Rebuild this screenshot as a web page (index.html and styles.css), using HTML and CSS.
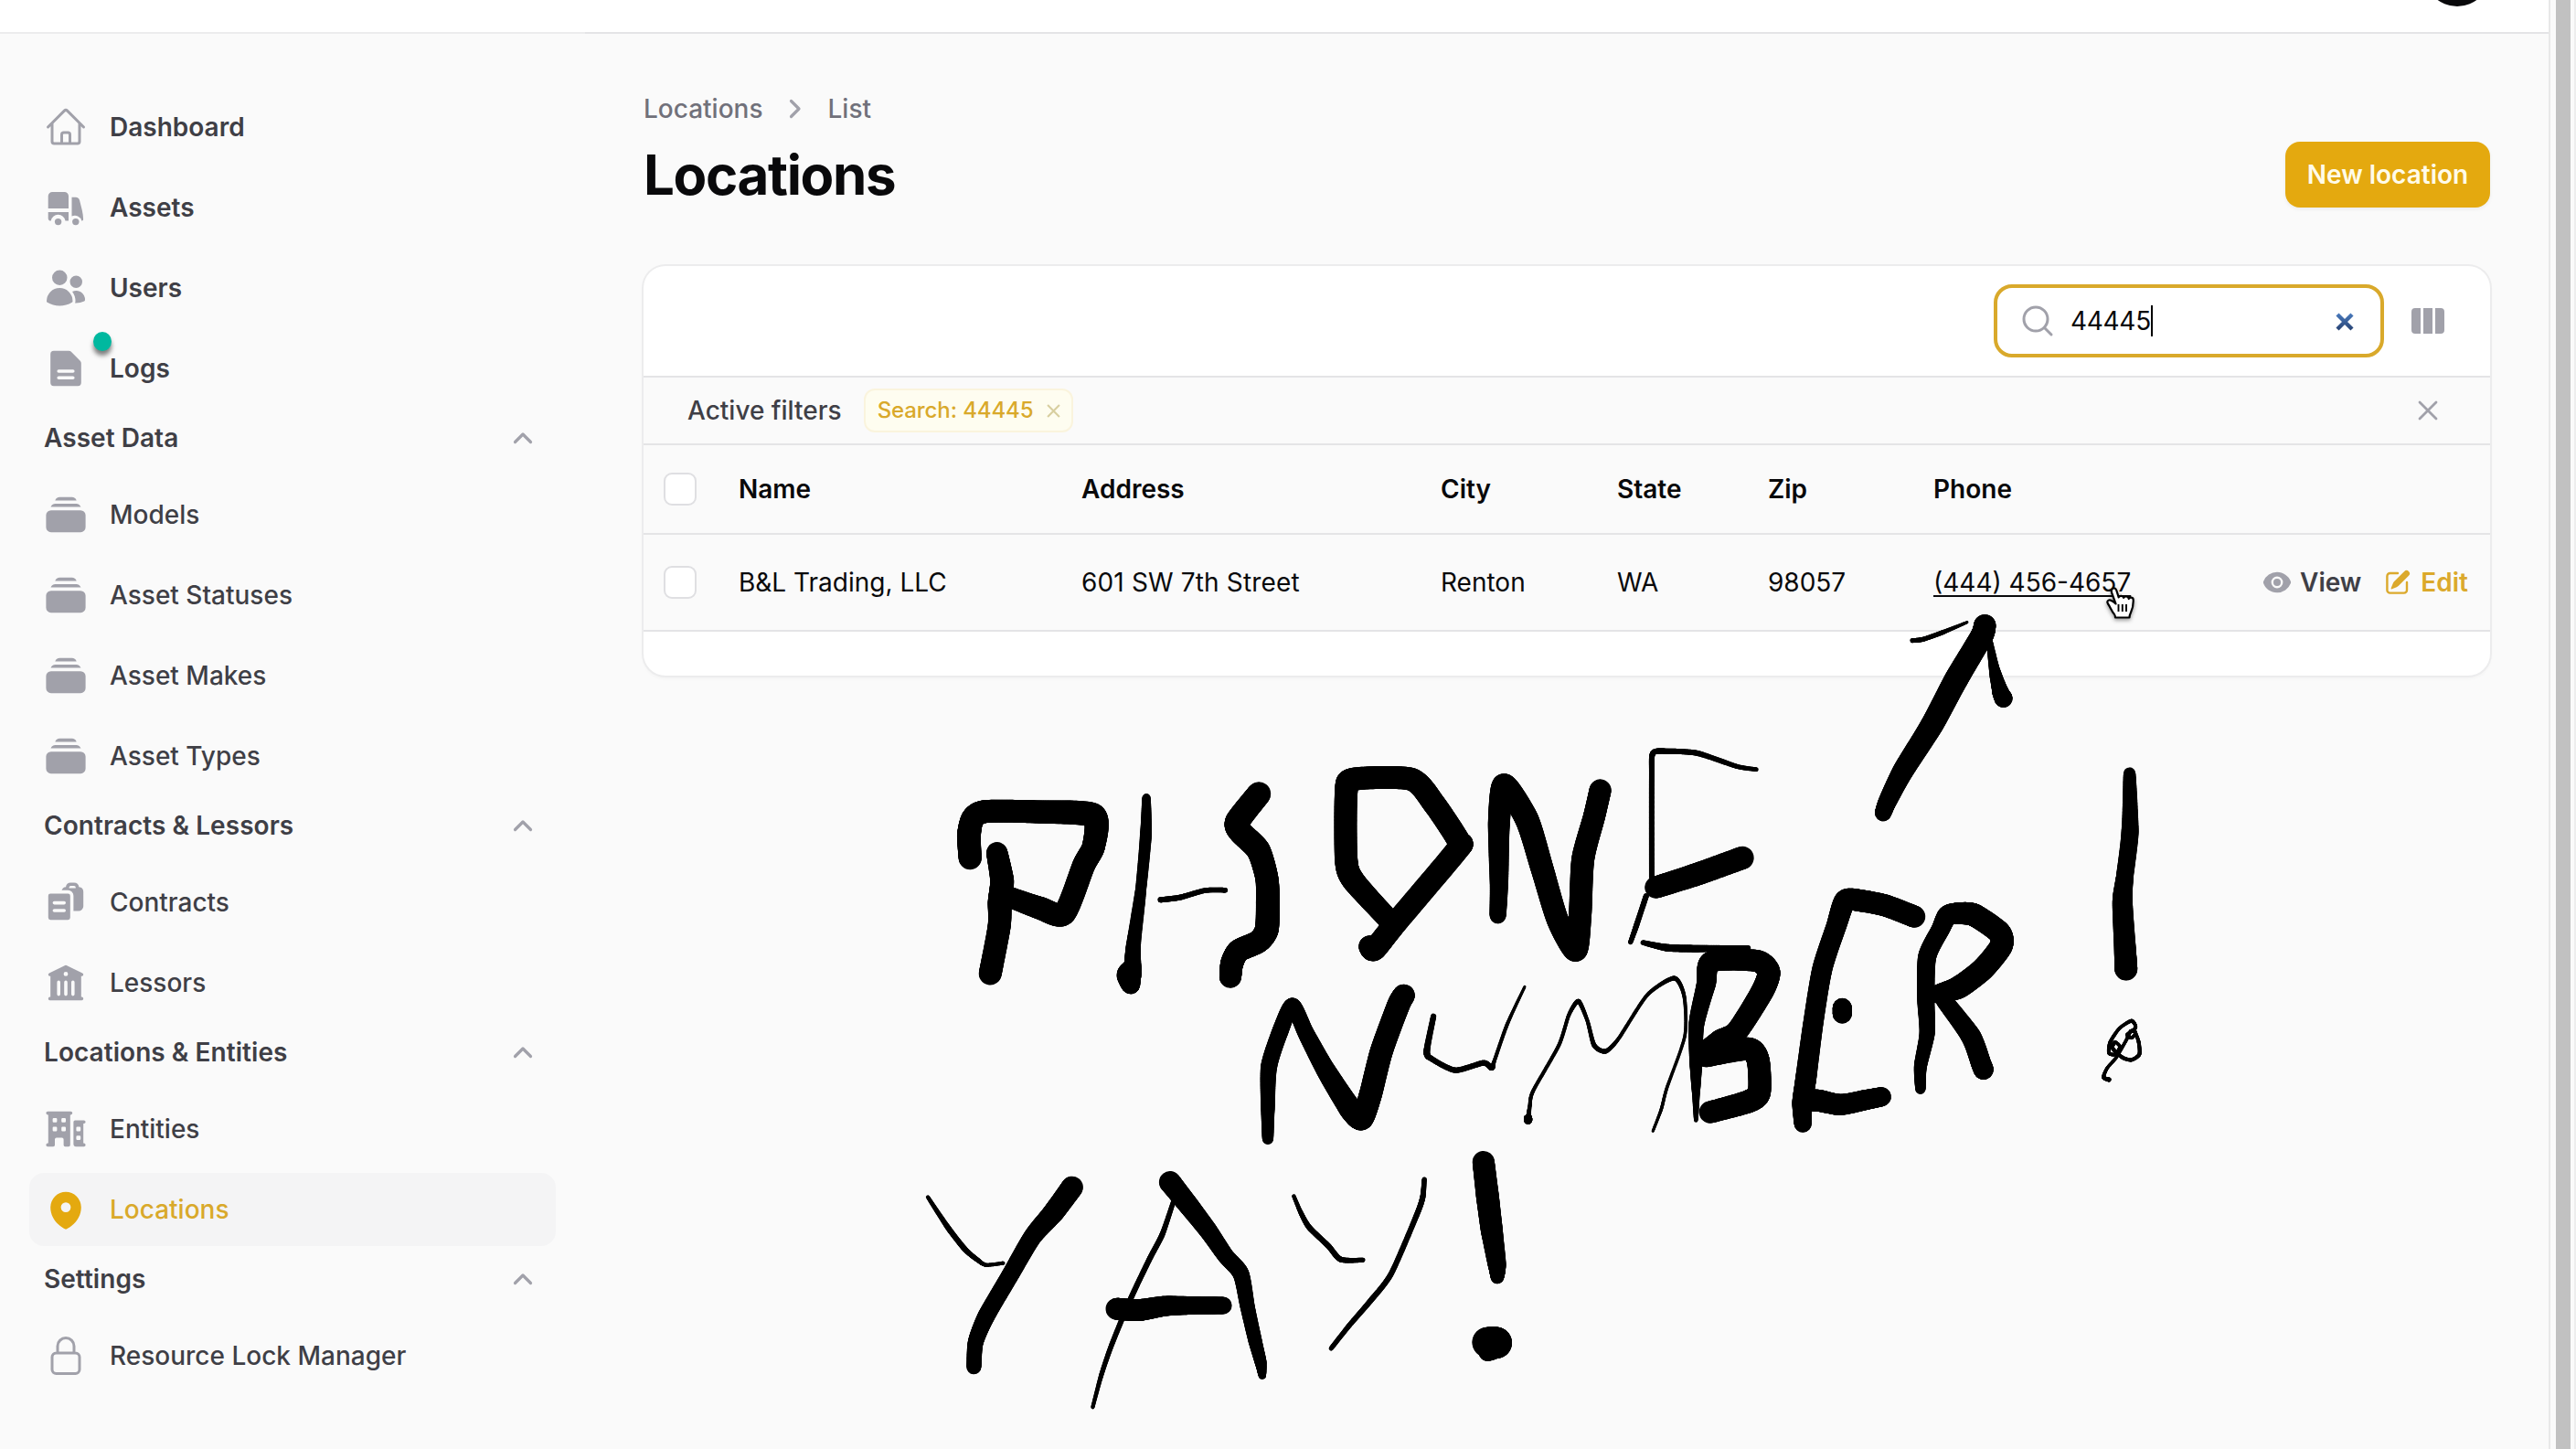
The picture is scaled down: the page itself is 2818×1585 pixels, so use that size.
FILE: index.html
```html
<!DOCTYPE html>
<html lang="en">
<head>
<meta charset="utf-8">
<title>Locations</title>
<link rel="stylesheet" href="styles.css">
</head>
<body>
<svg class="defs" aria-hidden="true">
  <symbol id="stack" viewBox="0 0 20 20"><path d="M5.127 3.502 5.25 3.5h9.5c.041 0 .082 0 .123.002A2.251 2.251 0 0 0 12.75 2h-5.5a2.25 2.25 0 0 0-2.123 1.502ZM1 10.25A2.25 2.25 0 0 1 3.25 8h13.5A2.25 2.25 0 0 1 19 10.25v5.5A2.25 2.25 0 0 1 16.75 18H3.25A2.25 2.25 0 0 1 1 15.75v-5.5ZM3.25 6.5c-.04 0-.082 0-.123.002A2.25 2.25 0 0 1 5.25 5h9.5c.98 0 1.814.627 2.123 1.502a3.819 3.819 0 0 0-.123-.002H3.25Z"/></symbol>
  <symbol id="chevron" viewBox="0 0 24 24"><path d="M3.5 16.5 12 8l8.500 8.500" fill="none" stroke="currentColor" stroke-width="3.200" stroke-linecap="round" stroke-linejoin="round"/></symbol>
</svg>
<div class="app">
  <div class="page">
    <header class="topbar"><div class="topbar-brand"></div><div class="topbar-main"><span class="avatar"></span></div></header>
    <div class="body">
      <nav class="sidebar">
        <a class="item strong"><svg class="icon" viewBox="0 0 24 24"><path class="line" d="m2.250 12 8.954-8.955a1.126 1.126 0 0 1 1.591 0L21.750 12M4.500 9.750v10.125c0 .621.504 1.125 1.125 1.125H9.750v-4.875c0-.621.504-1.125 1.125-1.125h2.250c.621 0 1.125.504 1.125 1.125V21h4.125c.621 0 1.125-.504 1.125-1.125V9.750M8.250 21h8.250"/></svg>Dashboard</a>
        <a class="item strong"><svg class="icon" viewBox="0 0 48 48"><path d="M9.500 7h13a4.500 4.500 0 0 1 4.500 4.500V25H4.700V11.500A4.500 4.500 0 0 1 9.500 7ZM4.700 29H27v9.500h-3.500a8 8 0 0 0-15.800 0H7.500a2.800 2.800 0 0 1-2.800-2.800ZM30.500 12.800h4.200a4.500 4.500 0 0 1 4.400 3.500c2 8 3.900 14 4 20.500 0 1-.5 1.700-1.300 1.700h-.5a7.600 7.600 0 0 0-10.800-5Z"/><circle cx="15.600" cy="39.600" r="3.700"/><circle cx="34.800" cy="39.600" r="3.700"/></svg>Assets</a>
        <a class="item strong"><svg class="icon" viewBox="0 0 24 24"><path d="M4.500 6.375a4.125 4.125 0 1 1 8.250 0 4.125 4.125 0 0 1-8.250 0ZM14.250 8.625a3.375 3.375 0 1 1 6.750 0 3.375 3.375 0 0 1-6.750 0ZM1.500 19.125a7.125 7.125 0 0 1 14.250 0v.003l-.001.119a.75.75 0 0 1-.363.63 13.067 13.067 0 0 1-6.761 1.873c-2.472 0-4.786-.684-6.760-1.873a.75.75 0 0 1-.364-.63l-.001-.122ZM17.250 19.128l-.001.144a2.250 2.250 0 0 1-.233.96 10.088 10.088 0 0 0 5.060-1.010.75.75 0 0 0 .42-.643 4.875 4.875 0 0 0-6.957-4.611 8.586 8.586 0 0 1 1.710 5.157v.003Z"/></svg>Users</a>
        <a class="item strong logs"><svg class="icon" viewBox="0 0 20 20"><path fill-rule="evenodd" d="M4.500 2A1.500 1.500 0 0 0 3 3.500v13A1.500 1.500 0 0 0 4.500 18h11a1.500 1.500 0 0 0 1.500-1.500V7.621a1.500 1.500 0 0 0-.44-1.060l-4.120-4.122A1.500 1.500 0 0 0 11.378 2H4.500Zm2.250 8.500a.75.75 0 0 0 0 1.500h6.500a.75.75 0 0 0 0-1.500h-6.500Zm0 3a.75.75 0 0 0 0 1.500h6.500a.75.75 0 0 0 0-1.500h-6.500Z"/></svg>Logs<span class="dot"></span></a>

        <div class="group">Asset Data<svg class="caret"><use href="#chevron"/></svg></div>
        <a class="item"><svg class="icon"><use href="#stack"/></svg>Models</a>
        <a class="item"><svg class="icon"><use href="#stack"/></svg>Asset Statuses</a>
        <a class="item"><svg class="icon"><use href="#stack"/></svg>Asset Makes</a>
        <a class="item"><svg class="icon"><use href="#stack"/></svg>Asset Types</a>

        <div class="group">Contracts &amp; Lessors<svg class="caret"><use href="#chevron"/></svg></div>
        <a class="item"><svg class="icon" viewBox="0 0 20 20"><path fill-rule="evenodd" d="M15.988 3.012A2.250 2.250 0 0 1 18 5.250v6.500A2.250 2.250 0 0 1 15.750 14H13.500v-3.379a3 3 0 0 0-.002-.121V7A2.500 2.500 0 0 0 11 4.500H8.128a2.252 2.252 0 0 1 1.884-1.488A2.250 2.250 0 0 1 12.250 1h1.500a2.250 2.250 0 0 1 2.238 2.012ZM11.500 3.250a.75.75 0 0 1 .75-.75h1.500a.75.75 0 0 1 .75.75v.250h-3v-.250Z"/><path fill-rule="evenodd" d="M2 7a1 1 0 0 1 1-1h8a1 1 0 0 1 1 1v10a1 1 0 0 1-1 1H3a1 1 0 0 1-1-1V7Zm2 3.250a.75.75 0 0 1 .75-.75h4.500a.75.75 0 0 1 0 1.500h-4.500a.75.75 0 0 1-.75-.75Zm0 3.500a.75.75 0 0 1 .75-.75h4.500a.75.75 0 0 1 0 1.500h-4.500a.75.75 0 0 1-.75-.75Z"/></svg>Contracts</a>
        <a class="item"><svg class="icon" viewBox="0 0 20 20"><path fill-rule="evenodd" d="M9.674 2.075a.75.75 0 0 1 .652 0l7.250 3.500A.75.75 0 0 1 17 6.957V16.500h.250a.75.75 0 0 1 0 1.500H2.750a.75.75 0 0 1 0-1.500H3V6.957a.75.75 0 0 1-.576-1.382l7.250-3.500ZM11 6a1 1 0 1 1-2 0 1 1 0 0 1 2 0ZM7.500 9.750a.75.75 0 0 0-1.500 0v5.500a.75.75 0 0 0 1.500 0v-5.500Zm3.250 0a.75.75 0 0 0-1.500 0v5.500a.75.75 0 0 0 1.500 0v-5.500Zm3.250 0a.75.75 0 0 0-1.500 0v5.500a.75.75 0 0 0 1.500 0v-5.500Z"/></svg>Lessors</a>

        <div class="group">Locations &amp; Entities<svg class="caret"><use href="#chevron"/></svg></div>
        <a class="item"><svg class="icon" viewBox="0 0 20 20"><path fill-rule="evenodd" d="M1 2.750A.75.75 0 0 1 1.750 2h10.500a.75.75 0 0 1 0 1.500H12v13.750a.75.75 0 0 1-.75.75h-1.500a.75.75 0 0 1-.75-.75v-2.500a.75.75 0 0 0-.75-.75h-2.500a.75.75 0 0 0-.75.75v2.500a.75.75 0 0 1-.75.75h-2.500a.75.75 0 0 1 0-1.500H2v-13h-.250A.75.75 0 0 1 1 2.750ZM4 5.500a.5.5 0 0 1 .5-.5h1a.5.5 0 0 1 .5.5v1a.5.5 0 0 1-.5.5h-1a.5.5 0 0 1-.5-.5v-1ZM4.500 9a.5.5 0 0 0-.5.5v1a.5.5 0 0 0 .5.5h1a.5.5 0 0 0 .5-.5v-1a.5.5 0 0 0-.5-.5h-1ZM8 5.500a.5.5 0 0 1 .5-.5h1a.5.5 0 0 1 .5.5v1a.5.5 0 0 1-.5.5h-1a.5.5 0 0 1-.5-.5v-1ZM8.500 9a.5.5 0 0 0-.5.5v1a.5.5 0 0 0 .5.5h1a.5.5 0 0 0 .5-.5v-1a.5.5 0 0 0-.5-.5h-1ZM14.250 6a.75.75 0 0 0-.75.75V17a1 1 0 0 0 1 1h3.750a.75.75 0 0 0 0-1.500H18v-9h.250a.75.75 0 0 0 0-1.500h-4Zm.5 3.500a.5.5 0 0 1 .5-.5h1a.5.5 0 0 1 .5.5v1a.5.5 0 0 1-.5.5h-1a.5.5 0 0 1-.5-.5v-1Zm.5 3.500a.5.5 0 0 0-.5.5v1a.5.5 0 0 0 .5.5h1a.5.5 0 0 0 .5-.5v-1a.5.5 0 0 0-.5-.5h-1Z"/></svg>Entities</a>
        <a class="item active"><svg class="icon" viewBox="0 0 20 20"><path fill-rule="evenodd" d="m9.690 18.933.003.001C9.890 19.020 10 19 10 19s.11.020.308-.066l.002-.001.006-.003.018-.008a5.741 5.741 0 0 0 .281-.14c.186-.096.446-.24.757-.433.62-.384 1.445-.966 2.274-1.765C15.302 14.988 17 12.493 17 9A7 7 0 1 0 3 9c0 3.492 1.698 5.988 3.355 7.584a13.731 13.731 0 0 0 2.273 1.765 11.842 11.842 0 0 0 .976.544l.062.029.018.008.006.003ZM10 11.250a2.250 2.250 0 1 0 0-4.500 2.250 2.250 0 0 0 0 4.500Z"/></svg>Locations</a>

        <div class="group">Settings<svg class="caret"><use href="#chevron"/></svg></div>
        <a class="item"><svg class="icon" viewBox="0 0 24 24"><path class="line" d="M16.500 10.500V6.750a4.500 4.500 0 1 0-9 0v3.750m-.75 11.250h10.500a2.250 2.250 0 0 0 2.250-2.250v-6.750a2.250 2.250 0 0 0-2.250-2.250H6.750a2.250 2.250 0 0 0-2.250 2.250v6.750a2.250 2.250 0 0 0 2.250 2.250Z"/></svg>Resource Lock Manager</a>
      </nav>

      <main class="main">
        <div class="heading">
          <div class="titles">
            <div class="crumbs"><span>Locations</span><svg class="crumb-sep" viewBox="0 0 40 40"><path d="m15.500 11.500 8.500 8.500-8.500 8.500" fill="none" stroke="currentColor" stroke-width="3.200" stroke-linecap="round" stroke-linejoin="round"/></svg><span>List</span></div>
            <h1>Locations</h1>
          </div>
          <button class="new">New location</button>
        </div>

        <section class="card">
          <div class="toolbar">
            <label class="search">
              <svg class="glass" viewBox="0 0 36 36"><circle cx="16" cy="16" r="13" /><path d="m25.500 25.500 7.500 7.500"/></svg>
              <span class="query">44445</span><span class="text-caret"></span>
              <svg class="clear" viewBox="0 0 20 20"><defs><linearGradient id="blue" x1="0" y1="0" x2="0" y2="20" gradientUnits="userSpaceOnUse"><stop offset="0" stop-color="#4a7cc0"/><stop offset="1" stop-color="#26406f"/></linearGradient></defs><path d="m2 2 16 16M18 2 2 18" stroke="url(#blue)" stroke-width="4.400"/></svg>
            </label>
            <svg class="columns" viewBox="0 0 36 28"><path d="M4 0h6v28H4a4 4 0 0 1-4-4V4a4 4 0 0 1 4-4ZM13 0h10v28H13ZM26 0h6a4 4 0 0 1 4 4v20a4 4 0 0 1-4 4h-6Z"/></svg>
          </div>
          <div class="filters">
            <span class="filters-label">Active filters</span>
            <span class="badge">Search: 44445<svg class="badge-x" viewBox="0 0 14 14"><path d="m1 1 12 12M13 1 1 13"/></svg></span>
            <svg class="filters-x" viewBox="0 0 22 22"><path d="m2 2 18 18M20 2 2 20"/></svg>
          </div>
          <div class="row head">
            <span class="check"></span><span>Name</span><span>Address</span><span>City</span><span>State</span><span>Zip</span><span>Phone</span><span></span>
          </div>
          <div class="row">
            <span class="check"></span><span>B&amp;L Trading, LLC</span><span class="address">601 SW 7th Street</span><span>Renton</span><span>WA</span><span>98057</span><span><a class="phone">(444) 456-4657</a></span>
            <span class="actions">
              <a class="view"><svg viewBox="0 0 20 20"><path d="M10 12.500a2.500 2.500 0 1 0 0-5 2.500 2.500 0 0 0 0 5Z"/><path fill-rule="evenodd" d="M.664 10.590a1.651 1.651 0 0 1 0-1.186A10.004 10.004 0 0 1 10 3c4.257 0 7.893 2.660 9.336 6.410.147.381.146.804 0 1.186A10.004 10.004 0 0 1 10 17c-4.257 0-7.893-2.660-9.336-6.410ZM14 10a4 4 0 1 1-8 0 4 4 0 0 1 8 0Z"/></svg>View</a>
              <a class="edit"><svg viewBox="0 0 20 20"><path d="m5.433 13.917 1.262-3.155A4 4 0 0 1 7.580 9.420l6.920-6.918a2.121 2.121 0 0 1 3 3l-6.920 6.918c-.383.383-.84.685-1.343.886l-3.154 1.262a.5.5 0 0 1-.65-.65Z"/><path d="M3.500 5.750c0-.69.56-1.250 1.250-1.250H10A.75.75 0 0 0 10 3H4.750A2.750 2.750 0 0 0 2 5.750v9.500A2.750 2.750 0 0 0 4.750 18h9.500A2.750 2.750 0 0 0 17 15.250V10a.75.75 0 0 0-1.500 0v5.250c0 .69-.56 1.250-1.250 1.250h-9.500c-.69 0-1.250-.56-1.250-1.250v-9.500Z"/></svg>Edit</a>
            </span>
          </div>
          <div class="foot"></div>
        </section>
      </main>
    </div>
  </div>
  <div class="scrollbar"><div class="thumb"></div></div>
</div>

<canvas class="ink" width="2818" height="1585"></canvas>
<svg class="hand" viewBox="0 0 34 38"><path d="M8.500 3.500C6.500 4.500 6.500 7 7.500 9.500l4 11c-2-1.800-5-4.500-7.500-4-2 .6-2 2.500-1 4 2.500 3.500 4 8.500 7 11.500 1 1.500 1 2.500 1 3.500h15.500c0-2 .5-3.500 1.500-5.500 1.800-4 3-7.500 2.700-14 0-2.800-4-3.200-5-1-.3-2.700-4.300-3.500-5.500-1.200-.8-2.500-4.500-2.700-5.500-.4L12.200 5.500C11.500 3.500 10 3 8.500 3.500Z" fill="#fff" stroke="#000" stroke-width="2.200" stroke-linejoin="round"/><path d="M14.500 21v8M18.800 21v8M23 21v8" stroke="#000" stroke-width="1.900"/></svg>
<script src="ink.js"></script>
</body>
</html>
```
FILE: styles.css
```css
* { box-sizing: border-box; }
body {
  margin: 0;
  width: 2818px;
  height: 1585px;
  overflow: hidden;
  position: relative;
  background: #fafafa;
  color: #09090b;
  font: 400 28px/40px Inter, "Liberation Sans", sans-serif;
}
.defs { display: none; }
svg { display: block; flex: none; fill: currentColor; }
.app { display: flex; height: 1585px; }
.page { width: 2788px; display: flex; flex-direction: column; }

.topbar { display: flex; height: 37px; background: #fff; }
.topbar-brand { width: 640px; border-bottom: 2px solid #ececed; }
.topbar-main {
  flex: 1;
  display: flex;
  justify-content: flex-end;
  align-items: flex-end;
  padding-right: 64px;
  border-bottom: 2px solid #e4e4e6;
  overflow: hidden;
}
.avatar { width: 72px; height: 72px; margin-bottom: 28px; border-radius: 50%; background: #09090b; flex: none; }

.body { display: flex; flex: 1; }
.sidebar { width: 640px; padding: 62px 32px 0; display: flex; flex-direction: column; }
.item {
  display: flex;
  align-items: center;
  gap: 24px;
  height: 80px;
  margin-bottom: 8px;
  padding: 0 16px;
  border-radius: 16px;
  font-weight: 500;
  color: #3f3f46;
}
.item.strong { font-weight: 600; }
.item:has(+ .group) { margin-bottom: 0; }
.icon { width: 48px; height: 48px; color: #a1a1aa; }
.line { fill: none; stroke: currentColor; stroke-width: 1.5; stroke-linecap: round; stroke-linejoin: round; }
.item.active { background: #f4f4f5; color: #d9a92b; }
.item.active .icon { color: #e4a90f; }
.group {
  display: flex;
  align-items: center;
  justify-content: space-between;
  height: 72px;
  margin-bottom: 8px;
  padding: 0 24px 0 16px;
  font-weight: 600;
  letter-spacing: .05px;
  color: #3f3f46;
}
.caret { width: 24px; height: 24px; color: #a1a1aa; }
.logs { position: relative; }
.dot {
  position: absolute;
  left: 70px;
  top: 0;
  width: 20px;
  height: 21px;
  border-radius: 50%;
  background: #00b89f;
  box-shadow: 0 5px 5px rgba(0, 0, 0, .5);
}

.main { flex: 1; padding: 62px 64px 0; }
.heading { display: flex; justify-content: space-between; align-items: center; height: 184px; }
.titles { padding-bottom: 56px; }
.crumbs { display: flex; align-items: center; font-weight: 500; color: #71717a; }
.crumb-sep { width: 40px; height: 40px; margin: 0 16px 0 15px; color: #a1a1aa; }
h1 { margin: 16px 0 0; font-size: 60px; line-height: 72px; font-weight: 700; letter-spacing: -1.35px; }
.new {
  width: 224px;
  height: 72px;
  border: 0;
  border-radius: 16px;
  background: #e4a90f;
  color: #fffbe9;
  font: 600 28px/40px Inter, sans-serif;
  padding: 0;
  white-space: nowrap;
  box-shadow: 0 2px 4px rgba(0, 0, 0, .06);
}

.card {
  width: 2020px;
  margin-top: 8px;
  border-radius: 24px;
  background: #fff;
  box-shadow: 0 0 0 2px #ececed, 0 3px 4px rgba(0, 0, 0, .04);
}
.toolbar {
  display: flex;
  align-items: center;
  justify-content: flex-end;
  height: 122px;
  padding-right: 50px;
  gap: 30px;
  border-bottom: 2px solid #e4e4e6;
}
.search {
  display: flex;
  align-items: center;
  width: 427px;
  height: 80px;
  padding: 0 29px 0 26px;
  border: 4px solid #d9a92b;
  border-radius: 20px;
  background: #fff;
}
.glass { width: 36px; height: 36px; fill: none; stroke: #a1a1aa; stroke-width: 3; stroke-linecap: round; }
.query { margin-left: 18px; letter-spacing: -.3px; }
.text-caret { width: 2px; height: 34px; background: #000; }
.clear { width: 20px; height: 20px; margin-left: auto; position: relative; top: 1px; }
.columns { width: 36px; height: 28px; color: #a1a1aa; }

.filters {
  display: flex;
  align-items: center;
  height: 74px;
  padding: 0 57px 0 48px;
  background: #fafafa;
  border-bottom: 2px solid #e4e4e6;
}
.filters-label { font-weight: 500; color: #3f3f46; }
.badge {
  display: flex;
  align-items: center;
  justify-content: space-between;
  width: 229px;
  height: 48px;
  margin-left: 24px;
  padding: 0 12px 0 13px;
  border: 2px solid #faf4dd;
  border-radius: 12px;
  background: #fefdf0;
  font-size: 24px;
  font-weight: 500;
  letter-spacing: -.1px;
  color: #d9a92b;
}
.badge-x { width: 15px; height: 15px; stroke: #d8cfa0; stroke-width: 2; }
.filters-x { width: 22px; height: 22px; margin-left: auto; stroke: #a1a1aa; stroke-width: 2.8; stroke-linecap: round; }

.row {
  display: grid;
  grid-template-columns: 104px 375px 393px 193px 165px 181px 240px 1fr;
  align-items: center;
  height: 106px;
  background: #fafafa;
  border-bottom: 2px solid #e4e4e6;
  white-space: nowrap;
}
.row.head { height: 98px; font-weight: 600; }
.check { width: 36px; height: 36px; margin-left: 22px; border: 2px solid #dfdfe2; border-radius: 9px; background: #fff; }
.address { letter-spacing: .15px; }
.phone { text-decoration: underline; text-decoration-thickness: 2px; text-underline-offset: 4px; }
.actions { display: flex; justify-content: flex-end; gap: 24px; padding-right: 24px; font-weight: 600; }
.actions a { display: flex; align-items: center; gap: 9px; }
.actions svg { width: 32px; height: 32px; }
.view { color: #3f3f46; }
.view svg { color: #a1a1aa; }
.edit { color: #dba92c; }
.foot { height: 48px; }

.scrollbar { width: 30px; padding: 0 6px 0 6px; border-left: 2px solid #e8e8e8; border-right: 2px solid #ededed; background: #fafafa; }
.thumb { width: 16px; height: 100%; background: #c1c1c1; }

.ink { position: absolute; left: 0; top: 0; pointer-events: none; }
.hand { position: absolute; left: 2303px; top: 640px; width: 34px; height: 38px; filter: drop-shadow(0 2px 2px rgba(0, 0, 0, .4)); }
```
FILE: ink.js
```js
// Freehand pen annotation: every stroke is a list of [x, y, pen width] samples.
const layers = [
  { ox: 2060, oy: 480, sx: 2.066, sy: 3, strokes: [
    [[66,662,5],[90,658,5],[135,635,5],[190,602,3]],
    [[230,612,24],[222,650,25],[165,790,26],[110,940,25],[45,1090,23],[10,1190,20],[0,1228,18]],
    [[240,660,6],[252,760,12],[265,830,18],[272,852,20]],
    [[557,1098,13],[558,1290,19],[546,1440,19],[541,1520,22],[547,1680,24],[549,1740,25]]
  ]},
  { ox: 1000, oy: 800, sx: 1.6333, sy: 3, strokes: [
    [[100,416,25],[98,340,26],[105,285,25],[128,263,25],[220,264,25],[320,276,27],[321,375,25],[303,440,25],[268,598,25],[225,580,25],[165,540,22]],
    [[148,398,23],[157,490,26],[153,560,26],[152,640,25],[136,795,25]],
    [[415,218,9],[414,340,13],[405,520,12],[392,700,16],[390,770,19],[384,800,27],[387,832,20]],
    [[440,553,6],[475,545,6],[520,522,5.5],[556,521,5.5]],
    [[616,205,26],[578,295,27],[583,330,26],[615,390,26],[630,480,25],[632,560,26],[630,650,26],[615,690,25],[580,720,25],[568,760,25],[565,806,24]],
    [[814,706,24],[823,714,25],[860,630,25],[970,390,25],[973,360,25],[930,240,25],[888,157,25],[785,157,25],[772,200,25],[772,420,25],[785,490,25],[850,622,23]],
    [[1043,604,18],[1045,500,20],[1045,300,24],[1054,176,25],[1095,290,26],[1122,450,25],[1150,620,24],[1182,718,25],[1190,600,25],[1195,420,25],[1215,280,24],[1226,193,24]],
    [[1505,125,4.5],[1470,115,5],[1400,72,6],[1345,65,6],[1320,72,6],[1318,150,6],[1318,480,6]],
    [[1480,415,25],[1400,468,25],[1325,512,24]],
    [[1308,540,6],[1290,640,6],[1280,692,5]],
    [[1302,693,5],[1345,710,8],[1400,713,8],[1490,711,6]],
    [[632,1338,12],[632,1240,15],[634,1100,18],[655,980,18],[676,900,17],[700,990,18],[735,1110,21],[780,1240,25],[800,1272,24],[815,1195,25],[835,1050,25],[865,900,25],[875,866,24]],
    [[928,935,6],[916,1050,7],[925,1075,6],[967,1112,6],[1017,1088,6],[1032,1104,6],[1037,1080,4],[1060,960,4],[1091,838,3]],
    [[1097,1276,9],[1097,1270,9]],
    [[1097,1275,6],[1100,1230,4],[1106,1180,4],[1152,1030,4],[1170,930,4],[1187,886,5],[1203,950,4],[1215,1030,5],[1235,1050,5],[1258,1010,4],[1310,865,4],[1358,810,5],[1376,870,4],[1377,1000,3.5],[1345,1170,3.5],[1335,1240,3.5],[1320,1312,3]],
    [[1397,1277,4],[1397,1180,9],[1397,1090,14],[1398,960,17],[1415,830,21],[1424,756,23],[1505,753,24],[1527,790,25],[1515,855,25],[1470,985,24],[1440,1015,24],[1408,1055,20]],
    [[1414,1066,24],[1490,1042,25],[1508,1080,25],[1510,1185,25],[1490,1215,25],[1422,1250,24]]
  ]},
  { ox: 1360, oy: 980, sx: 1.5077, sy: 3, strokes: [
    [[1107,68,24],[1060,32,24],[1020,16,24],[993,16,24],[978,100,22],[955,240,22],[940,420,22],[928,600,23],[922,680,22],[923,748,19]],
    [[926,670,24],[950,672,24],[985,685,23],[1025,670,22],[1053,659,21]],
    [[988,367,21],[988,387,21]],
    [[1117,634,11],[1117,560,14],[1128,450,17],[1126,340,19],[1128,200,20],[1150,110,20],[1162,64,22],[1185,57,24],[1207,64,25],[1247,120,25],[1250,165,25],[1220,240,25],[1180,300,25],[1145,322,20]],
    [[1155,340,18],[1200,460,22],[1217,550,22],[1221,570,22]],
    [[1428,603,5],[1419,595,4],[1425,565,3.5],[1440,530,3.5],[1456,475,3.5],[1464,444,4],[1472,450,3.5],[1465,466,3.5],[1458,455,3.5],[1472,432,3.5],[1465,410,4],[1445,435,3.5],[1430,480,4],[1428,515,4],[1438,520,3.5],[1446,495,3.5],[1438,480,3.5],[1434,500,4],[1450,530,4],[1465,538,4],[1478,520,4],[1477,480,4],[1470,440,3.5]]
  ]},
  { ox: 980, oy: 1230, sx: 2.1778, sy: 3, strokes: [
    [[76,238,4],[125,340,6],[165,410,6],[195,445,5],[215,461,4],[256,455,4]],
    [[420,206,24],[375,290,23],[325,370,20],[270,500,19],[215,630,19],[190,715,17],[186,796,16]],
    [[469,928,4],[490,820,5],[515,720,5.5],[560,570,6],[605,440,6],[635,360,6],[662,250,5]],
    [[653,189,24],[700,270,22],[745,350,20],[785,430,18],[822,490,18],[838,600,16],[856,710,15],[869,780,13],[873,824,8]],
    [[526,605,24],[580,609,24],[640,596,22],[700,594,20],[780,594,19]],
    [[948,235,4],[965,290,5],[985,338,6],[1030,398,6],[1060,443,6],[1113,445,5]],
    [[1259,180,5],[1255,240,6],[1240,300,6],[1180,490,6],[1130,580,6],[1080,660,5.5],[1037,735,5]],
    [[1400,123,24],[1410,240,25],[1420,350,24],[1432,460,20],[1433,502,14]],
    [[1409,715,33],[1431,717,34],[1408,750,17]]
  ]}
];

const pen = document.querySelector('.ink').getContext('2d');
pen.strokeStyle = '#000';
pen.lineCap = 'round';
const TENSION = 0.36;
const STEPS = 24;

for (const { ox, oy, sx, sy, strokes } of layers) {
  for (const samples of strokes) {
    const pts = samples.map(([x, y, w]) => [ox + x / sx, oy + y / sy, w]);
    for (let i = 0; i < pts.length - 1; i++) {
      const p0 = pts[i - 1] || pts[i], p1 = pts[i], p2 = pts[i + 1], p3 = pts[i + 2] || p2;
      let from = p1;
      for (let k = 1; k <= STEPS; k++) {
        const t = k / STEPS, t2 = t * t, t3 = t2 * t;
        const at = n => (2*t3 - 3*t2 + 1) * p1[n] + (t3 - 2*t2 + t) * TENSION * (p2[n] - p0[n])
          + (3*t2 - 2*t3) * p2[n] + (t3 - t2) * TENSION * (p3[n] - p1[n]);
        const to = [at(0), at(1), p1[2] + (p2[2] - p1[2]) * t];
        pen.lineWidth = to[2];
        pen.beginPath();
        pen.moveTo(from[0], from[1]);
        pen.lineTo(to[0], to[1]);
        pen.stroke();
        from = to;
      }
    }
  }
}
```
